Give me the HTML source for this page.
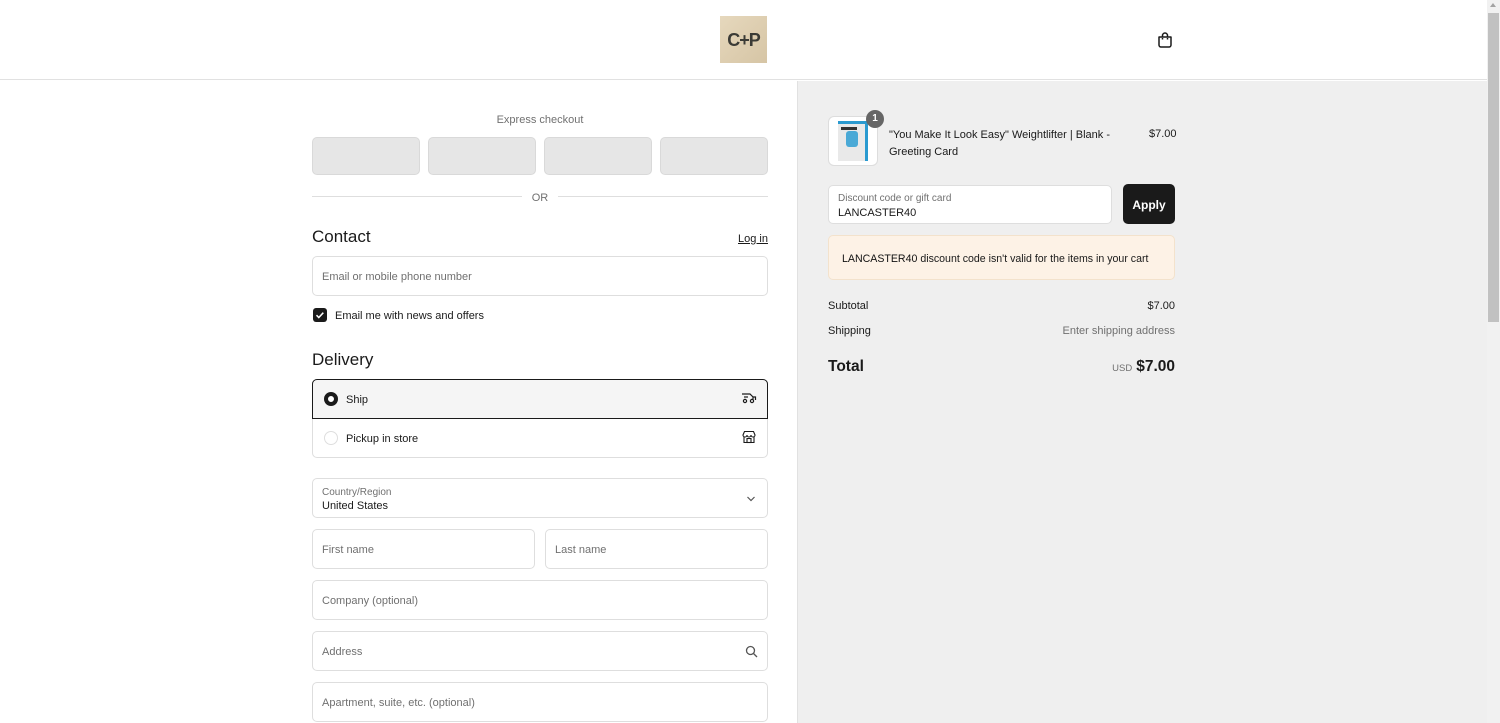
<!DOCTYPE html>
<html><head><meta charset="utf-8"><style>
*{box-sizing:border-box;margin:0;padding:0}
body{width:1500px;height:723px;overflow:hidden;background:#fff;font-family:"Liberation Sans",sans-serif;color:#1a1a1a;font-size:12px;position:relative}
.a{position:absolute}
.t{position:relative;top:2px}
.inp{position:absolute;border:1px solid #dedede;border-radius:5px;background:#fff}
.ph{position:absolute;left:9px;top:15px;color:#707070;font-size:11.5px}
.ex{position:absolute;top:137px;width:108px;height:38px;background:#e6e6e6;border:1px solid #d9d9d9;border-radius:5px}
</style></head><body>
<div class="a" style="left:0;top:0;width:1487px;height:80px;border-bottom:1px solid #e1e1e1;background:#fff"></div>
<div class="a" style="left:720px;top:16px;width:47px;height:47px;background:linear-gradient(135deg,#e6d8bd,#d6c5a5);font-weight:bold;font-size:18px;color:#3b3b36;text-align:center;line-height:49px;letter-spacing:-1px">C+P</div>
<svg class="a" style="left:1156px;top:31px" width="18" height="18" viewBox="0 0 18 18" fill="none" stroke="#1a1a1a" stroke-width="1.5"><path d="M3 6h12v8a2 2 0 0 1-2 2H5a2 2 0 0 1-2-2z" stroke-linejoin="round"/><path d="M6.5 6V4.5a2.5 2.5 0 0 1 5 0V6"/><path d="M6.5 7v1.5M11.5 7v1.5"/></svg>
<div class="a" style="left:797px;top:81px;width:690px;height:642px;background:#efefef;border-left:1px solid #e1e1e1"></div>
<div class="a" style="left:1487px;top:0;width:13px;height:723px;background:#f1f1f1"></div>
<div class="a" style="left:1488px;top:13px;width:11px;height:309px;background:#c1c1c1"></div>
<div class="a" style="left:1490px;top:3px;width:0;height:0;border:3px solid transparent;border-bottom:4px solid #a3a3a3;border-top:0"></div>

<div class="a" style="left:312px;top:114px;width:456px;text-align:center;color:#707070;font-size:11px">Express checkout</div>
<div class="ex" style="left:312px"></div><div class="ex" style="left:428px"></div><div class="ex" style="left:544px"></div><div class="ex" style="left:660px"></div>
<div class="a" style="left:312px;top:196px;width:210px;border-top:1px solid #dedede"></div>
<div class="a" style="left:558px;top:196px;width:210px;border-top:1px solid #dedede"></div>
<div class="a" style="left:522px;top:192px;width:36px;text-align:center;color:#707070;font-size:11px">OR</div>

<div class="a" style="left:312px;top:227px;font-size:17px">Contact</div>
<div class="a" style="left:738px;top:233px;font-size:11px;text-decoration:underline">Log in</div>
<div class="inp" style="left:312px;top:256px;width:456px;height:40px"><span class="ph" style="top:14px;font-size:11px">Email or mobile phone number</span></div>
<div class="a" style="left:313px;top:308px;width:14px;height:14px;background:#1a1a1a;border-radius:3px"><svg width="14" height="14"><path d="M3.5 7.2l2.3 2.3 4.5-4.8" stroke="#fff" stroke-width="1.5" fill="none"/></svg></div>
<div class="a" style="left:335px;top:310px;font-size:11px">Email me with news and offers</div>

<div class="a" style="left:312px;top:350px;font-size:17px">Delivery</div>
<div class="a" style="left:312px;top:379px;width:456px;height:79px;border:1px solid #dedede;border-radius:5px"></div>
<div class="a" style="left:312px;top:379px;width:456px;height:40px;border:1px solid #1a1a1a;border-radius:5px 5px 0 0;background:#f5f5f5"></div>
<div class="a" style="left:324px;top:392px;width:14px;height:14px;border-radius:50%;border:4px solid #1a1a1a;background:#fff"></div>
<div class="a" style="left:346px;top:394px;font-size:11px">Ship</div>
<svg class="a" style="left:741px;top:391px" width="16" height="14" viewBox="0 0 16 14" fill="none" stroke="#1a1a1a" stroke-width="1.2"><path d="M1 3h8l3 3v3"/><path d="M3 6h4"/><circle cx="4" cy="10" r="1.6"/><circle cx="11" cy="10" r="1.6"/><path d="M12 6h2.5v3"/></svg>
<div class="a" style="left:324px;top:431px;width:14px;height:14px;border-radius:50%;border:1px solid #dedede"></div>
<div class="a" style="left:346px;top:433px;font-size:11px">Pickup in store</div>
<svg class="a" style="left:741px;top:430px" width="16" height="14" viewBox="0 0 16 14" fill="none" stroke="#1a1a1a" stroke-width="1.1"><path d="M2 5l1.5-3.5h9L14 5a2 2 0 0 1-4 0 2 2 0 0 1-4 0 2 2 0 0 1-4 0z"/><path d="M3 7v5.5h10V7"/><rect x="6" y="8.5" width="4" height="4"/></svg>

<div class="inp" style="left:312px;top:478px;width:456px;height:40px"><span class="a" style="left:9px;top:8px;font-size:10px;color:#707070">Country/Region</span><span class="a" style="left:9px;top:21px;font-size:11px">United States</span><svg class="a" style="left:433px;top:16px" width="10" height="8"><path d="M1.5 2l3.5 3.5L8.5 2" stroke="#555" stroke-width="1.2" fill="none"/></svg></div>
<div class="inp" style="left:312px;top:529px;width:223px;height:40px"><span class="ph" style="top:14px;font-size:11px">First name</span></div>
<div class="inp" style="left:545px;top:529px;width:223px;height:40px"><span class="ph" style="top:14px;font-size:11px">Last name</span></div>
<div class="inp" style="left:312px;top:580px;width:456px;height:40px"><span class="ph" style="top:14px;font-size:11px">Company (optional)</span></div>
<div class="inp" style="left:312px;top:631px;width:456px;height:40px"><span class="ph" style="top:14px;font-size:11px">Address</span><svg class="a" style="left:432px;top:13px" width="13" height="13" fill="none" stroke="#555" stroke-width="1.3"><circle cx="5.5" cy="5.5" r="4"/><path d="M8.5 8.5l3.5 3.5"/></svg></div>
<div class="inp" style="left:312px;top:682px;width:456px;height:40px"><span class="ph" style="top:14px;font-size:11px">Apartment, suite, etc. (optional)</span></div>

<div class="a" style="left:828px;top:116px;width:50px;height:50px;border:1px solid #ddd;border-radius:6px;background:#fff;overflow:hidden"><div class="a" style="left:9px;top:4px;width:30px;height:40px;background:#e9e9e9;border-right:3px solid #2a9ad0;border-top:3px solid #2a9ad0"></div><div class="a" style="left:17px;top:14px;width:12px;height:16px;background:#4aa9d6;border-radius:3px"></div><div class="a" style="left:12px;top:10px;width:16px;height:3px;background:#333"></div></div>
<div class="a" style="left:866px;top:110px;width:18px;height:18px;border-radius:50%;background:#666;color:#fff;font-size:10px;font-weight:bold;text-align:center;line-height:18px">1</div>
<div class="a" style="left:889px;top:127px;width:240px;font-size:11px;line-height:16.5px">"You Make It Look Easy" Weightlifter | Blank -<br>Greeting Card</div>
<div class="a" style="left:1149px;top:128px;font-size:11px">$7.00</div>
<div class="inp" style="left:828px;top:185px;width:284px;height:39px"><span class="a" style="left:9px;top:7px;font-size:10px;color:#707070">Discount code or gift card</span><span class="a" style="left:9px;top:21px;font-size:11px">LANCASTER40</span></div>
<div class="a" style="left:1123px;top:184px;width:52px;height:40px;background:#1a1a1a;border-radius:5px;color:#fff;font-weight:bold;font-size:12px;text-align:center;line-height:42px">Apply</div>
<div class="a" style="left:828px;top:235px;width:347px;height:45px;background:#fdf2e6;border:1px solid #f3e2cc;border-radius:5px;font-size:10.6px;padding:17px 0 0 13px"><span style="color:#111">LANCASTER40</span> discount code isn't valid for the items in your cart</div>
<div class="a" style="left:828px;top:300px;font-size:11px">Subtotal</div>
<div class="a" style="right:325px;top:300px;font-size:11px">$7.00</div>
<div class="a" style="left:828px;top:325px;font-size:11px">Shipping</div>
<div class="a" style="right:325px;top:325px;font-size:11px;color:#707070">Enter shipping address</div>
<div class="a" style="left:828px;top:358px;font-size:15.5px;font-weight:bold">Total</div>
<div class="a" style="right:325px;top:358px;font-size:15.5px;font-weight:bold"><span style="font-size:9.5px;font-weight:normal;color:#707070;margin-right:4px">USD</span>$7.00</div>
</body></html>
